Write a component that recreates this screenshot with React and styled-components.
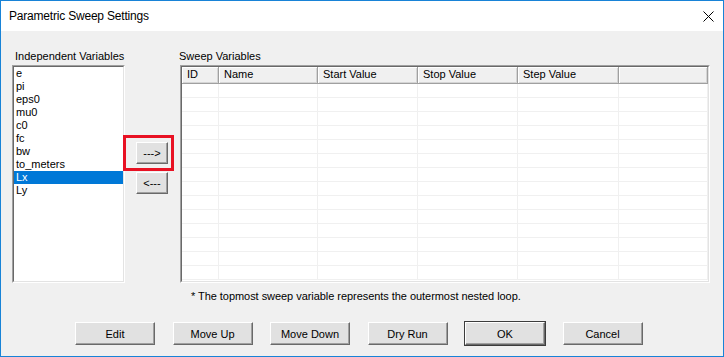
import React from "react";
import styled, { createGlobalStyle } from "styled-components";

const GlobalStyle = createGlobalStyle`
  html, body {
    margin: 0;
    padding: 0;
    background: #ffffff;
  }
  * {
    box-sizing: border-box;
  }
`;

const Window = styled.div`
  width: 724px;
  height: 357px;
  border: 1px solid #1883d7;
  background: #f0f0f0;
  display: flex;
  flex-direction: column;
  font-family: "Liberation Sans", Arial, sans-serif;
  font-size: 11px;
  color: #000;
`;

const TitleBar = styled.div`
  height: 30px;
  background: #fff;
  display: flex;
  align-items: center;
  justify-content: space-between;
  padding: 0 9px 0 8px;
`;

const Title = styled.span`
  font-size: 12px;
  letter-spacing: -0.2px;
`;

const Body = styled.div`
  flex: 1;
  display: flex;
  flex-direction: column;
  padding: 19px 13px 0 11px;
`;

const MainRow = styled.div`
  display: flex;
`;

const Column = styled.div`
  display: flex;
  flex-direction: column;
  width: ${(p) => (p.$width ? p.$width + "px" : "auto")};
  flex: ${(p) => (p.$grow ? 1 : "none")};
`;

const Label = styled.div`
  height: 13px;
  line-height: 13px;
  margin-bottom: 2px;
  margin-left: ${(p) => p.$indent || 0}px;
  white-space: nowrap;
`;

const Sunken = styled.div`
  height: 218px;
  border: 1px solid;
  border-color: #a0a0a0 #ffffff #ffffff #a0a0a0;
  display: flex;
`;

const SunkenInner = styled.div`
  flex: 1;
  border: 1px solid;
  border-color: #696969 #e3e3e3 #e3e3e3 #696969;
  background: #fff;
  overflow: hidden;
`;

const ListItem = styled.div`
  height: 13px;
  line-height: 13px;
  padding-left: 2px;
  background: ${(p) => (p.$selected ? "#0078d7" : "transparent")};
  color: ${(p) => (p.$selected ? "#fff" : "#000")};
`;

const Middle = styled.div`
  position: relative;
  width: 55px;
  display: flex;
  flex-direction: column;
  gap: 8px;
  padding: 92px 0 0 11px;
`;

const Highlight = styled.div`
  position: absolute;
  left: -2px;
  top: 85px;
  width: 51px;
  height: 36px;
  border: 3px solid #e81123;
  pointer-events: none;
`;

const Button = styled.button`
  width: ${(p) => p.$w || 80}px;
  height: ${(p) => p.$h || 23}px;
  padding: 0;
  font-family: inherit;
  font-size: 11px;
  color: #000;
  background: #e1e1e1;
  border: 1px solid;
  border-color: #ffffff #696969 #696969 #ffffff;
  box-shadow: inset -1px -1px 0 #a0a0a0;
  outline: ${(p) => (p.$default ? "1px solid #3c3c3c" : "none")};
  outline-offset: 0;
  cursor: default;
`;

const Grid = styled.div`
  display: grid;
  grid-template-columns: 37px 99px 100px 100px 101px 1fr;
`;

const HeadCell = styled.div`
  height: 17px;
  line-height: 15px;
  padding-left: 5px;
  background: #f0f0f0;
  border-right: 1px solid #a0a0a0;
  border-bottom: 1px solid #a0a0a0;
  box-shadow: inset 1px 1px 0 #ffffff, inset -1px -1px 0 #d5d5d5;
  white-space: nowrap;
`;

const Cell = styled.div`
  height: 14px;
  border-right: 1px solid #f0f0f0;
  border-bottom: 1px solid #f0f0f0;
`;

const Footnote = styled.div`
  margin: 7px 0 0 179px;
  height: 13px;
  line-height: 13px;
  white-space: nowrap;
  letter-spacing: -0.05px;
`;

const ButtonRow = styled.div`
  display: flex;
  gap: 17.5px;
  margin-top: 19px;
  padding-left: 63px;
`;

const CloseIcon = () => (
  <svg width="11" height="11" viewBox="0 0 11 11">
    <path d="M0.5 0.5 L10.5 10.5 M10.5 0.5 L0.5 10.5" stroke="#000" strokeWidth="1" fill="none" />
  </svg>
);

const variables = ["e", "pi", "eps0", "mu0", "c0", "fc", "bw", "to_meters", "Lx", "Ly"];
const headers = ["ID", "Name", "Start Value", "Stop Value", "Step Value", ""];
const bottomButtons = ["Edit", "Move Up", "Move Down", "Dry Run", "OK", "Cancel"];

export default function App() {
  const rows = Array.from({ length: 14 });
  return (
    <>
      <GlobalStyle />
      <Window>
        <TitleBar>
          <Title>Parametric Sweep Settings</Title>
          <CloseIcon />
        </TitleBar>
        <Body>
          <MainRow>
            <Column $width={113}>
              <Label $indent={3}>Independent Variables</Label>
              <Sunken>
                <SunkenInner>
                  {variables.map((v) => (
                    <ListItem key={v} $selected={v === "Lx"}>{v}</ListItem>
                  ))}
                </SunkenInner>
              </Sunken>
            </Column>
            <Middle>
              <Button $w={32} $h={22}>---&gt;</Button>
              <Button $w={32} $h={22}>&lt;---</Button>
              <Highlight />
            </Middle>
            <Column $grow>
              <Label $indent={-1}>Sweep Variables</Label>
              <Sunken>
                <SunkenInner>
                  <Grid>
                    {headers.map((h, i) => (
                      <HeadCell key={i}>{h}</HeadCell>
                    ))}
                    {rows.map((_, r) =>
                      headers.map((_, c) => <Cell key={r + "-" + c} />)
                    )}
                  </Grid>
                </SunkenInner>
              </Sunken>
            </Column>
          </MainRow>
          <Footnote>* The topmost sweep variable represents the outermost nested loop.</Footnote>
          <ButtonRow>
            {bottomButtons.map((b) => (
              <Button key={b} $default={b === "OK"}>{b}</Button>
            ))}
          </ButtonRow>
        </Body>
      </Window>
    </>
  );
}
